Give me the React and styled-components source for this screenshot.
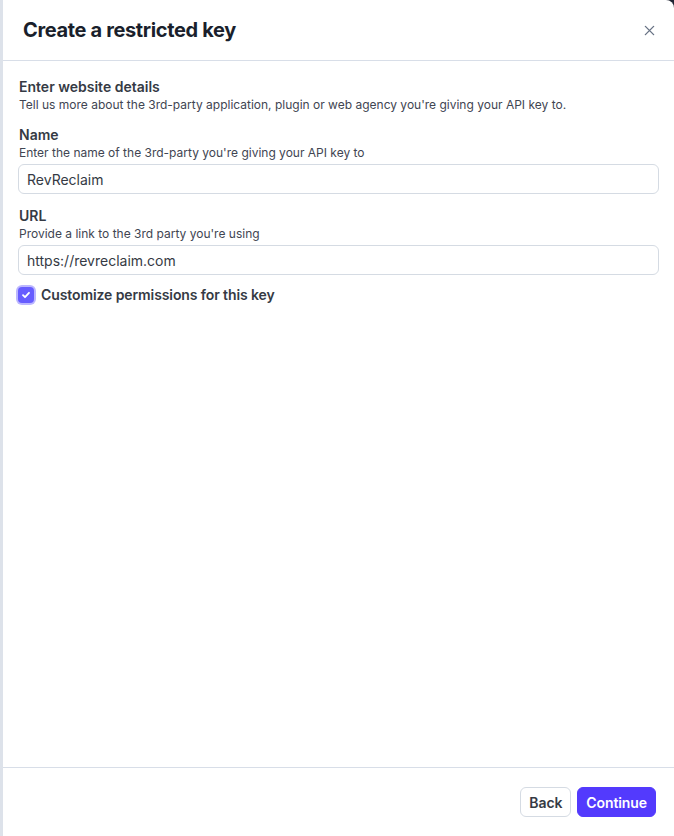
import React from 'react'
import styled, { createGlobalStyle } from 'styled-components'

const GlobalStyle = createGlobalStyle`
  html, body {
    margin: 0;
    padding: 0;
    height: 100%;
    background: #1f2433;
  }
  #root {
    height: 100%;
  }
  * {
    box-sizing: border-box;
  }
`

const Dialog = styled.div`
  height: 836px;
  display: flex;
  flex-direction: column;
  background: #ffffff;
  border-left: 3px solid #dde2ea;
  border-top-right-radius: 8px;
  font-family: Inter, "Liberation Sans", sans-serif;
  color: #353a44;
`

const Header = styled.header`
  height: 61px;
  flex-shrink: 0;
  display: flex;
  align-items: center;
  justify-content: space-between;
  padding: 0 15px 0 20px;
  border-bottom: 1px solid #d8dee8;
  h1 {
    margin: 0;
    font-size: 20px;
    font-weight: 700;
    letter-spacing: -0.35px;
    color: #1a1f2c;
  }
`

const CloseBtn = styled.button`
  border: 0;
  background: transparent;
  padding: 4px;
  display: flex;
  color: #687385;
  cursor: pointer;
`

const Body = styled.div`
  flex: 1;
  padding: 16px 14px 0 16px;
  display: flex;
  flex-direction: column;
  gap: 12px;
`

const Section = styled.div`
  display: flex;
  flex-direction: column;
`

const Label = styled.div`
  font-size: 14px;
  font-weight: 600;
  line-height: 20px;
  color: #353a44;
`

const Help = styled.div`
  font-size: 12px;
  line-height: 16px;
  color: #414552;
`

const Input = styled.input`
  height: 30px;
  width: 100%;
  margin-top: 3px;
  margin-left: -1px;
  padding: 0 8px;
  border: 1px solid #d5dbe3;
  border-radius: 6px;
  font-family: inherit;
  font-size: 14px;
  color: #353a44;
  outline: none;
`

const CheckRow = styled.label`
  display: flex;
  align-items: center;
  gap: 7px;
  margin-top: -2px;
  line-height: 20px;
  font-size: 14px;
  font-weight: 600;
  letter-spacing: -0.1px;
  color: #353a44;
  cursor: pointer;
`

const Box = styled.span`
  width: 16px;
  height: 16px;
  margin-left: -1px;
  border-radius: 4px;
  background: #675dff;
  box-shadow: 0 0 0 2px #bcb7ff;
  display: flex;
  align-items: center;
  justify-content: center;
`

const Footer = styled.footer`
  flex-shrink: 0;
  height: 69px;
  border-top: 1px solid #d8dee8;
  display: flex;
  align-items: center;
  justify-content: flex-end;
  gap: 6px;
  padding: 0 18px 0 0;
`

const Button = styled.button`
  height: 30px;
  padding: 0 8px;
  border-radius: 6px;
  font-family: inherit;
  font-size: 14px;
  font-weight: 600;
  letter-spacing: -0.1px;
  cursor: pointer;
  border: 1px solid ${p => (p.$primary ? '#533afd' : '#d5dbe3')};
  background: ${p => (p.$primary ? '#533afd' : '#ffffff')};
  color: ${p => (p.$primary ? '#ffffff' : '#353a44')};
`

const App = () => {
  return (
    <>
      <GlobalStyle />
      <Dialog>
        <Header>
          <h1>Create a restricted key</h1>
          <CloseBtn aria-label="Close">
            <svg width="11" height="11" viewBox="0 0 12 12" fill="none" stroke="currentColor" strokeWidth="1.5" strokeLinecap="round">
              <path d="M1.5 1.5l9 9M10.5 1.5l-9 9" />
            </svg>
          </CloseBtn>
        </Header>
        <Body>
          <Section>
            <Label>Enter website details</Label>
            <Help>Tell us more about the 3rd-party application, plugin or web agency you're giving your API key to.</Help>
          </Section>
          <Section>
            <Label>Name</Label>
            <Help>Enter the name of the 3rd-party you're giving your API key to</Help>
            <Input defaultValue="RevReclaim" />
          </Section>
          <Section>
            <Label>URL</Label>
            <Help>Provide a link to the 3rd party you're using</Help>
            <Input defaultValue="https://revreclaim.com" />
          </Section>
          <CheckRow>
            <Box>
              <svg width="10" height="10" viewBox="0 0 10 10" fill="none" stroke="#fff" strokeWidth="1.8" strokeLinecap="round" strokeLinejoin="round">
                <path d="M2 5.2l2 2 4-4.4" />
              </svg>
            </Box>
            Customize permissions for this key
          </CheckRow>
        </Body>
        <Footer>
          <Button>Back</Button>
          <Button $primary>Continue</Button>
        </Footer>
      </Dialog>
    </>
  )
}

export default App
